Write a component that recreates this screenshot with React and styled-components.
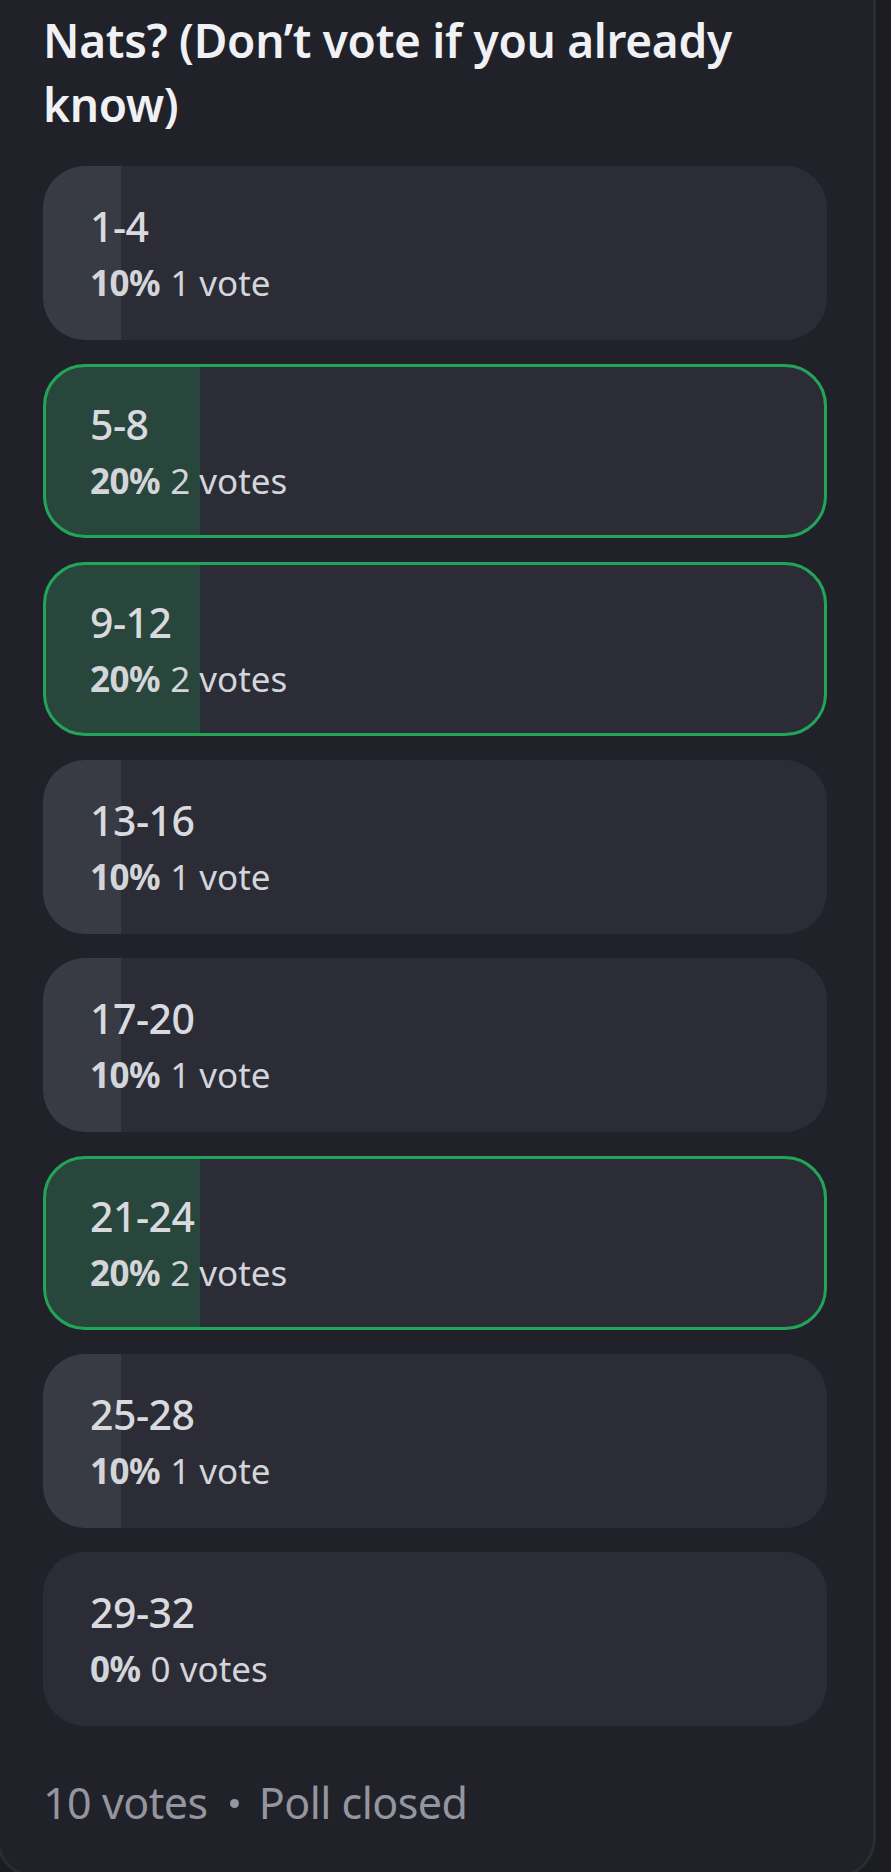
import React from 'react';
import styled, { createGlobalStyle } from 'styled-components';

const GlobalStyle = createGlobalStyle`
  html, body {
    margin: 0;
    padding: 0;
    background: #1c1d21;
    overflow: hidden;
  }
  body {
    font-family: "Noto Sans", "Open Sans", sans-serif;
  }
`;

const Page = styled.div`
  width: 891px;
  min-height: 1872px;
  background: #1c1d21;
`;

const PollCard = styled.div`
  box-sizing: border-box;
  width: 880px;
  margin-left: -4px;
  padding: 8px 46px 46px 44px;
  background: #202129;
  border: 3px solid #2b2c34;
  border-top: none;
  border-radius: 0 0 40px 40px;
`;

const Question = styled.h2`
  margin: 0 0 30px;
  font-size: 46px;
  line-height: 64px;
  font-weight: 600;
  color: #f0f1f4;
  letter-spacing: -0.3px;
`;

const Options = styled.div`
  display: flex;
  flex-direction: column;
  gap: 24px;
`;

const Option = styled.div`
  box-sizing: border-box;
  height: 174px;
  display: flex;
  flex-direction: column;
  justify-content: center;
  gap: 12px;
  padding: 0 44px;
  border-radius: 42px;
  border: 3px solid ${(p) => (p.$winner ? '#23a559' : 'transparent')};
  background-origin: border-box;
  background-image: linear-gradient(
    to right,
    ${(p) => (p.$winner ? '#28463c' : '#393b44')} 0 ${(p) => p.$pct}%,
    #2b2c35 ${(p) => p.$pct}% 100%
  );
`;

const Label = styled.div`
  font-size: 41px;
  line-height: 48px;
  font-weight: 500;
  color: #d9dadf;
  letter-spacing: -0.5px;
`;

const Tally = styled.div`
  font-size: 35px;
  line-height: 42px;
  color: #d4d5da;
  strong {
    font-weight: 700;
    margin-right: 10px;
    letter-spacing: -0.5px;
  }
`;

const Footer = styled.div`
  display: flex;
  align-items: center;
  margin-top: 51px;
  font-size: 43px;
  line-height: 52px;
  color: #94959e;
  letter-spacing: -0.5px;
`;

const Dot = styled.span`
  width: 9px;
  height: 9px;
  margin: 0 20px 0 22px;
  border-radius: 50%;
  background: #94959e;
`;

const options = [
  { label: '1-4', votes: 1 },
  { label: '5-8', votes: 2, winner: true },
  { label: '9-12', votes: 2, winner: true },
  { label: '13-16', votes: 1 },
  { label: '17-20', votes: 1 },
  { label: '21-24', votes: 2, winner: true },
  { label: '25-28', votes: 1 },
  { label: '29-32', votes: 0 },
];

const total = 10;

export default function App() {
  return (
    <Page>
      <GlobalStyle />
      <PollCard>
        <Question>Nats? (Don’t vote if you already know)</Question>
        <Options>
          {options.map((o) => {
            const pct = Math.round((o.votes / total) * 100);
            return (
              <Option key={o.label} $pct={pct} $winner={o.winner}>
                <Label>{o.label}</Label>
                <Tally>
                  <strong>{pct}%</strong>
                  {o.votes} {o.votes === 1 ? 'vote' : 'votes'}
                </Tally>
              </Option>
            );
          })}
        </Options>
        <Footer>
          {total} votes
          <Dot />
          Poll closed
        </Footer>
      </PollCard>
    </Page>
  );
}
